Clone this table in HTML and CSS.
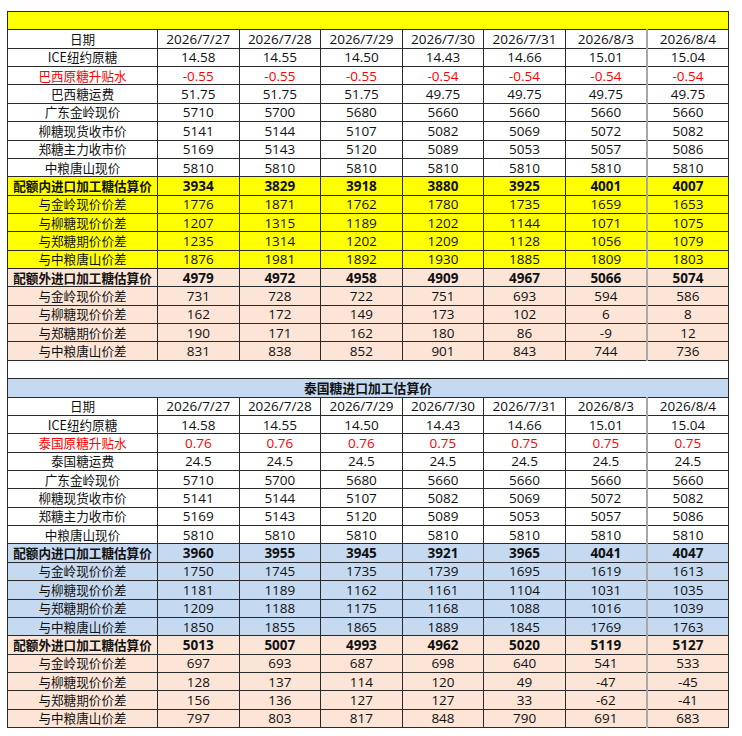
FILE: index.html
```html
<!DOCTYPE html>
<html lang="zh-CN">
<head>
<meta charset="utf-8">
<title>进口加工糖估算价</title>
<link rel="stylesheet" href="styles.css">
</head>
<body>
<table class="sheet">
<colgroup><col class="c-label"><col><col><col><col><col><col><col></colgroup>
<tbody>
<tr class="title-y"><td colspan="8"></td></tr>
<tr><td>日期</td><td>2026/7/27</td><td>2026/7/28</td><td>2026/7/29</td><td>2026/7/30</td><td>2026/7/31</td><td>2026/8/3</td><td class="last">2026/8/4</td></tr>
<tr><td>ICE纽约原糖</td><td>14.58</td><td>14.55</td><td>14.50</td><td>14.43</td><td>14.66</td><td>15.01</td><td class="last">15.04</td></tr>
<tr class="red"><td>巴西原糖升贴水</td><td>-0.55</td><td>-0.55</td><td>-0.55</td><td>-0.54</td><td>-0.54</td><td>-0.54</td><td class="last">-0.54</td></tr>
<tr><td>巴西糖运费</td><td>51.75</td><td>51.75</td><td>51.75</td><td>49.75</td><td>49.75</td><td>49.75</td><td class="last">49.75</td></tr>
<tr><td>广东金岭现价</td><td>5710</td><td>5700</td><td>5680</td><td>5660</td><td>5660</td><td>5660</td><td class="last">5660</td></tr>
<tr><td>柳糖现货收市价</td><td>5141</td><td>5144</td><td>5107</td><td>5082</td><td>5069</td><td>5072</td><td class="last">5082</td></tr>
<tr><td>郑糖主力收市价</td><td>5169</td><td>5143</td><td>5120</td><td>5089</td><td>5053</td><td>5057</td><td class="last">5086</td></tr>
<tr><td>中粮唐山现价</td><td>5810</td><td>5810</td><td>5810</td><td>5810</td><td>5810</td><td>5810</td><td class="last">5810</td></tr>
<tr class="yellow bold"><td>配额内进口加工糖估算价</td><td>3934</td><td>3829</td><td>3918</td><td>3880</td><td>3925</td><td>4001</td><td class="last">4007</td></tr>
<tr class="yellow"><td>与金岭现价价差</td><td>1776</td><td>1871</td><td>1762</td><td>1780</td><td>1735</td><td>1659</td><td class="last">1653</td></tr>
<tr class="yellow"><td>与柳糖现价价差</td><td>1207</td><td>1315</td><td>1189</td><td>1202</td><td>1144</td><td>1071</td><td class="last">1075</td></tr>
<tr class="yellow"><td>与郑糖期价价差</td><td>1235</td><td>1314</td><td>1202</td><td>1209</td><td>1128</td><td>1056</td><td class="last">1079</td></tr>
<tr class="yellow"><td>与中粮唐山价差</td><td>1876</td><td>1981</td><td>1892</td><td>1930</td><td>1885</td><td>1809</td><td class="last">1803</td></tr>
<tr class="peach bold"><td>配额外进口加工糖估算价</td><td>4979</td><td>4972</td><td>4958</td><td>4909</td><td>4967</td><td>5066</td><td class="last">5074</td></tr>
<tr class="peach"><td>与金岭现价价差</td><td>731</td><td>728</td><td>722</td><td>751</td><td>693</td><td>594</td><td class="last">586</td></tr>
<tr class="peach"><td>与柳糖现价价差</td><td>162</td><td>172</td><td>149</td><td>173</td><td>102</td><td>6</td><td class="last">8</td></tr>
<tr class="peach"><td>与郑糖期价价差</td><td>190</td><td>171</td><td>162</td><td>180</td><td>86</td><td>-9</td><td class="last">12</td></tr>
<tr class="peach"><td>与中粮唐山价差</td><td>831</td><td>838</td><td>852</td><td>901</td><td>843</td><td>744</td><td class="last">736</td></tr>
<tr class="blank"><td colspan="8"></td></tr>
<tr class="title-b"><td colspan="8">泰国糖进口加工估算价</td></tr>
<tr><td>日期</td><td>2026/7/27</td><td>2026/7/28</td><td>2026/7/29</td><td>2026/7/30</td><td>2026/7/31</td><td>2026/8/3</td><td class="last">2026/8/4</td></tr>
<tr><td>ICE纽约原糖</td><td>14.58</td><td>14.55</td><td>14.50</td><td>14.43</td><td>14.66</td><td>15.01</td><td class="last">15.04</td></tr>
<tr class="red"><td>泰国原糖升贴水</td><td>0.76</td><td>0.76</td><td>0.76</td><td>0.75</td><td>0.75</td><td>0.75</td><td class="last">0.75</td></tr>
<tr><td>泰国糖运费</td><td>24.5</td><td>24.5</td><td>24.5</td><td>24.5</td><td>24.5</td><td>24.5</td><td class="last">24.5</td></tr>
<tr><td>广东金岭现价</td><td>5710</td><td>5700</td><td>5680</td><td>5660</td><td>5660</td><td>5660</td><td class="last">5660</td></tr>
<tr><td>柳糖现货收市价</td><td>5141</td><td>5144</td><td>5107</td><td>5082</td><td>5069</td><td>5072</td><td class="last">5082</td></tr>
<tr><td>郑糖主力收市价</td><td>5169</td><td>5143</td><td>5120</td><td>5089</td><td>5053</td><td>5057</td><td class="last">5086</td></tr>
<tr><td>中粮唐山现价</td><td>5810</td><td>5810</td><td>5810</td><td>5810</td><td>5810</td><td>5810</td><td class="last">5810</td></tr>
<tr class="blue bold"><td>配额内进口加工糖估算价</td><td>3960</td><td>3955</td><td>3945</td><td>3921</td><td>3965</td><td>4041</td><td class="last">4047</td></tr>
<tr class="blue"><td>与金岭现价价差</td><td>1750</td><td>1745</td><td>1735</td><td>1739</td><td>1695</td><td>1619</td><td class="last">1613</td></tr>
<tr class="blue"><td>与柳糖现价价差</td><td>1181</td><td>1189</td><td>1162</td><td>1161</td><td>1104</td><td>1031</td><td class="last">1035</td></tr>
<tr class="blue"><td>与郑糖期价价差</td><td>1209</td><td>1188</td><td>1175</td><td>1168</td><td>1088</td><td>1016</td><td class="last">1039</td></tr>
<tr class="blue"><td>与中粮唐山价差</td><td>1850</td><td>1855</td><td>1865</td><td>1889</td><td>1845</td><td>1769</td><td class="last">1763</td></tr>
<tr class="peach bold"><td>配额外进口加工糖估算价</td><td>5013</td><td>5007</td><td>4993</td><td>4962</td><td>5020</td><td>5119</td><td class="last">5127</td></tr>
<tr class="peach"><td>与金岭现价价差</td><td>697</td><td>693</td><td>687</td><td>698</td><td>640</td><td>541</td><td class="last">533</td></tr>
<tr class="peach"><td>与柳糖现价价差</td><td>128</td><td>137</td><td>114</td><td>120</td><td>49</td><td>-47</td><td class="last">-45</td></tr>
<tr class="peach"><td>与郑糖期价价差</td><td>156</td><td>136</td><td>127</td><td>127</td><td>33</td><td>-62</td><td class="last">-41</td></tr>
<tr class="peach"><td>与中粮唐山价差</td><td>797</td><td>803</td><td>817</td><td>848</td><td>790</td><td>691</td><td class="last">683</td></tr>
</tbody>
</table>
</body>
</html>
```

FILE: styles.css
```css
html, body {
  margin: 0;
  padding: 0;
  background: #ffffff;
}

body {
  padding: 11px 0 0 7px;
  font-family: "Open Sans", "Noto Sans CJK SC", sans-serif;
  font-size: 13.5px;
  color: #111;
}

.sheet {
  border-collapse: collapse;
  table-layout: fixed;
  width: 722px;
}

.sheet col.c-label {
  width: 150px;
}

.sheet tr {
  height: 18.36px;
}

.sheet td {
  border: 1px solid #2a2a2a;
  padding: 0;
  text-align: center;
  vertical-align: middle;
  line-height: 16px;
  white-space: nowrap;
  overflow: hidden;
}

.sheet td:first-child {
  font-family: "Noto Sans CJK SC", sans-serif;
  font-size: 12.6px;
}

.sheet td.last {
  border-left: 2px solid #a8a8a8;
}

.title-y td {
  background: #ffff00;
}

.sheet .title-b td {
  background: #c5d9f1;
  font-weight: bold;
  font-family: "Noto Sans CJK SC", sans-serif;
  font-size: 12.8px;
}

.blank td {
  background: #ffffff;
}

.red td {
  color: #ff0000;
}

.yellow td {
  background: #ffff00;
}

.peach td {
  background: #fce4d6;
}

.blue td {
  background: #c5d9f1;
}

.bold td {
  font-weight: bold;
}
```
